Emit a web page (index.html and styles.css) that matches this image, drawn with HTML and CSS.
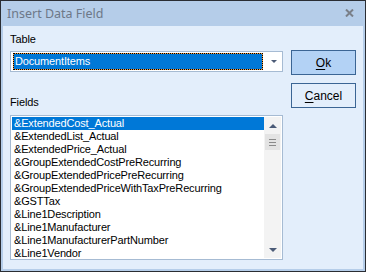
FILE: index.html
```html
<!DOCTYPE html>
<html>
<head>
<meta charset="utf-8">
<link rel="stylesheet" href="styles.css">
</head>
<body>
<div class="window">
  <div class="titlebar">
    <span class="title">Insert Data Field</span>
    <svg class="close" width="9" height="8" viewBox="0 0 9 8"><path d="M1 0.5 L8 7.5 M8 0.5 L1 7.5" stroke="#7a7f88" stroke-width="2"/></svg>
  </div>
  <div class="client">
    <div class="left">
      <div class="label">Table</div>
      <div class="combo">
        <div class="combo-sel"><span>DocumentItems</span></div>
        <div class="combo-btn"><span class="tri-down small"></span></div>
      </div>
      <div class="label fields-label">Fields</div>
      <div class="listbox">
        <div class="items">
          <div class="item selected">&amp;ExtendedCost_Actual</div>
          <div class="item">&amp;ExtendedList_Actual</div>
          <div class="item">&amp;ExtendedPrice_Actual</div>
          <div class="item">&amp;GroupExtendedCostPreRecurring</div>
          <div class="item">&amp;GroupExtendedPricePreRecurring</div>
          <div class="item">&amp;GroupExtendedPriceWithTaxPreRecurring</div>
          <div class="item">&amp;GSTTax</div>
          <div class="item">&amp;Line1Description</div>
          <div class="item">&amp;Line1Manufacturer</div>
          <div class="item">&amp;Line1ManufacturerPartNumber</div>
          <div class="item">&amp;Line1Vendor</div>
        </div>
        <div class="scrollbar">
          <div class="sb-btn"><span class="tri-up"></span></div>
          <div class="thumb"><i></i><i></i><i></i></div>
          <div class="sb-track"></div>
          <div class="sb-btn"><span class="tri-down"></span></div>
        </div>
      </div>
    </div>
    <div class="buttons">
      <div class="btn btn-default"><u>O</u>k</div>
      <div class="btn"><u>C</u>ancel</div>
    </div>
  </div>
</div>
</body>
</html>
```

FILE: styles.css
```css
html, body {
  margin: 0;
  padding: 0;
  background: #ffffff;
}
body {
  font-family: "Liberation Sans", Arial, sans-serif;
  font-size: 11px;
  color: #000;
}
.window {
  width: 366px;
  height: 272px;
  box-sizing: border-box;
  border: 1px solid #2a2d33;
  background: #b5cde9;
  display: flex;
  flex-direction: column;
}
.titlebar {
  height: 25px;
  flex: none;
  display: flex;
  align-items: center;
  justify-content: space-between;
  padding: 0 11px 0 6px;
}
.title {
  font-family: "Noto Sans", "Liberation Sans", sans-serif;
  font-size: 12.5px;
  color: #6d7888;
  margin-top: -1px;
}
.close {
  display: block;
  margin-top: -2px;
}
.client {
  flex: 1;
  margin: 0 2px 2px 2px;
  background: #e3eefb;
  display: flex;
  padding: 0 7px;
  gap: 8px;
}
.left {
  width: 273px;
  display: flex;
  flex-direction: column;
  padding-top: 7px;
}
.label {
  line-height: 13px;
  height: 13px;
  letter-spacing: -0.1px;
}
.combo {
  margin-top: 5px;
  height: 21px;
  box-sizing: border-box;
  border: 1px solid #a6bbd3;
  background: #fff;
  padding: 1px 0 1px 2px;
  display: flex;
}
.combo-sel {
  width: 250px;
  box-sizing: border-box;
  border: 1px dotted #000;
  background: linear-gradient(#0078d7, #0078d7) padding-box, linear-gradient(#f59a3c, #f59a3c) border-box;
  color: #fff;
  line-height: 15px;
  padding-left: 1px;
  letter-spacing: -0.15px;
}
.combo-btn {
  flex: 1;
  display: flex;
  align-items: center;
  justify-content: center;
  padding-left: 2px;
}
.fields-label {
  margin-top: 24px;
}
.listbox {
  margin-top: 6px;
  height: 145px;
  box-sizing: border-box;
  border: 1px solid #a6bbd3;
  background: #fff;
  padding: 1px;
  display: flex;
}
.items {
  flex: 1;
  overflow: hidden;
}
.item {
  height: 13px;
  line-height: 13px;
  padding-left: 2px;
  white-space: nowrap;
  letter-spacing: -0.15px;
}
.item.selected {
  background: #0078d7;
  color: #fff;
}
.scrollbar {
  width: 17px;
  background: #f3f3f3;
  display: flex;
  flex-direction: column;
}
.sb-btn {
  height: 17px;
  display: flex;
  align-items: center;
  justify-content: center;
}
.thumb {
  height: 16px;
  margin: 0 1px;
  background: #e3e3e3;
  display: flex;
  flex-direction: column;
  align-items: center;
  justify-content: center;
  gap: 2px;
}
.thumb i {
  display: block;
  width: 7px;
  height: 1px;
  background: #8a8a8a;
}
.sb-track {
  flex: 1;
}
.tri-up {
  width: 0;
  height: 0;
  border-left: 4px solid transparent;
  border-right: 4px solid transparent;
  border-bottom: 4px solid #4b5b77;
}
.tri-down {
  width: 0;
  height: 0;
  border-left: 4px solid transparent;
  border-right: 4px solid transparent;
  border-top: 4px solid #4b5b77;
}
.tri-down.small {
  border-left-width: 3px;
  border-right-width: 3px;
  border-top-width: 3px;
}
.buttons {
  width: 65px;
  display: flex;
  flex-direction: column;
  gap: 8px;
  padding-top: 24px;
}
.btn {
  height: 25px;
  box-sizing: border-box;
  border: 1px solid #3b6594;
  background: #e3eefb;
  display: flex;
  align-items: center;
  justify-content: center;
  font-size: 12px;
}
.btn-default {
  background: #b3d2f5;
}
.btn u {
  text-decoration-thickness: 1px;
  text-underline-offset: 2px;
}
```
